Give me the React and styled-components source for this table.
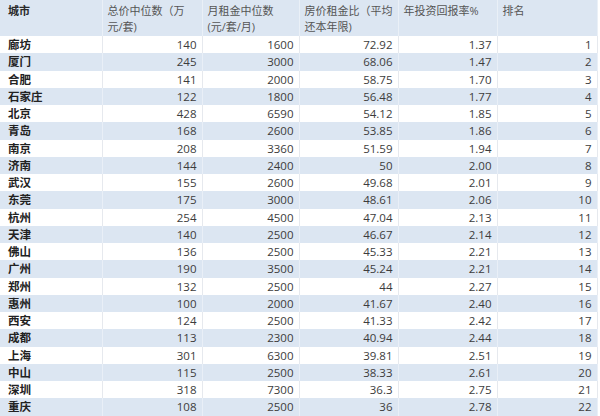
import React from 'react';
import styled, { createGlobalStyle } from 'styled-components';

const GlobalStyle = createGlobalStyle`
  body {
    margin: 0;
    background: #fff;
    font-family: "Open Sans", "Noto Sans CJK SC", sans-serif;
  }
`;

const Sheet = styled.table`
  width: 597px;
  table-layout: fixed;
  border-collapse: collapse;
  font-size: 11.5px;
  color: #3a3a3a;
`;

const Col = styled.col`
  width: ${p => p.$w}px;
`;

const HeadRow = styled.tr`
  height: 36px;
  background: #dce6f2;
`;

const HeadCell = styled.th`
  padding: 3px 5px 0 ${p => (p.$first ? 8 : 5)}px;
  text-align: left;
  vertical-align: top;
  font-size: 11px;
  font-weight: ${p => (p.$first ? 700 : 400)};
  color: ${p => (p.$first ? '#2a2a2a' : '#555')};
  line-height: 16px;
  border-right: 1px solid #eaf0f7;
  white-space: nowrap;
  overflow: hidden;
`;

const Row = styled.tr`
  height: 17.25px;
  background: ${p => (p.$shade ? '#dce6f2' : '#fff')};
`;

const Cell = styled.td`
  padding: 0 5px 0 8px;
  line-height: 17px;
  text-align: ${p => (p.$city ? 'left' : 'right')};
  font-weight: ${p => (p.$city ? 700 : 400)};
  color: ${p => (p.$city ? '#222' : '#3c3c3c')};
  border-right: 1px solid ${p => (p.$shade ? '#e9eff7' : '#e6e9ee')};
  white-space: nowrap;
`;

const rows = [
  ['廊坊', '140', '1600', '72.92', '1.37', '1'],
  ['厦门', '245', '3000', '68.06', '1.47', '2'],
  ['合肥', '141', '2000', '58.75', '1.70', '3'],
  ['石家庄', '122', '1800', '56.48', '1.77', '4'],
  ['北京', '428', '6590', '54.12', '1.85', '5'],
  ['青岛', '168', '2600', '53.85', '1.86', '6'],
  ['南京', '208', '3360', '51.59', '1.94', '7'],
  ['济南', '144', '2400', '50', '2.00', '8'],
  ['武汉', '155', '2600', '49.68', '2.01', '9'],
  ['东莞', '175', '3000', '48.61', '2.06', '10'],
  ['杭州', '254', '4500', '47.04', '2.13', '11'],
  ['天津', '140', '2500', '46.67', '2.14', '12'],
  ['佛山', '136', '2500', '45.33', '2.21', '13'],
  ['广州', '190', '3500', '45.24', '2.21', '14'],
  ['郑州', '132', '2500', '44', '2.27', '15'],
  ['惠州', '100', '2000', '41.67', '2.40', '16'],
  ['西安', '124', '2500', '41.33', '2.42', '17'],
  ['成都', '113', '2300', '40.94', '2.44', '18'],
  ['上海', '301', '6300', '39.81', '2.51', '19'],
  ['中山', '115', '2500', '38.33', '2.61', '20'],
  ['深圳', '318', '7300', '36.3', '2.75', '21'],
  ['重庆', '108', '2500', '36', '2.78', '22'],
];

const widths = [102, 100, 97, 99, 99, 100];

export default function App() {
  return (
    <>
      <GlobalStyle />
      <Sheet>
        <colgroup>
          {widths.map((w, i) => <Col key={i} $w={w} />)}
        </colgroup>
        <thead>
          <HeadRow>
            <HeadCell $first>城市</HeadCell>
            <HeadCell>总价中位数（万<br />元/套)</HeadCell>
            <HeadCell>月租金中位数<br />(元/套/月)</HeadCell>
            <HeadCell>房价租金比（平均<br />还本年限)</HeadCell>
            <HeadCell>年投资回报率%</HeadCell>
            <HeadCell>排名</HeadCell>
          </HeadRow>
        </thead>
        <tbody>
          {rows.map((r, i) => (
            <Row key={r[0]} $shade={i % 2 === 1}>
              {r.map((v, j) => (
                <Cell key={j} $city={j === 0} $shade={i % 2 === 1}>{v}</Cell>
              ))}
            </Row>
          ))}
        </tbody>
      </Sheet>
    </>
  );
}
